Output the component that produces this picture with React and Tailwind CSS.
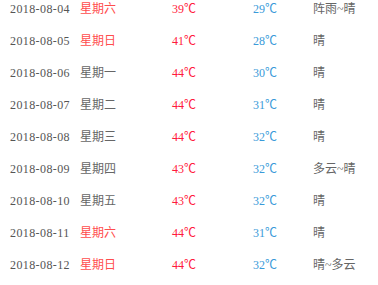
import React from 'react';

const rows = [
  { date: '2018-08-04', week: '星期六', high: '39℃', low: '29℃', weather: '阵雨~晴', weekend: true },
  { date: '2018-08-05', week: '星期日', high: '41℃', low: '28℃', weather: '晴', weekend: true },
  { date: '2018-08-06', week: '星期一', high: '44℃', low: '30℃', weather: '晴' },
  { date: '2018-08-07', week: '星期二', high: '44℃', low: '31℃', weather: '晴' },
  { date: '2018-08-08', week: '星期三', high: '44℃', low: '32℃', weather: '晴' },
  { date: '2018-08-09', week: '星期四', high: '43℃', low: '32℃', weather: '多云~晴' },
  { date: '2018-08-10', week: '星期五', high: '43℃', low: '32℃', weather: '晴' },
  { date: '2018-08-11', week: '星期六', high: '44℃', low: '31℃', weather: '晴', weekend: true },
  { date: '2018-08-12', week: '星期日', high: '44℃', low: '32℃', weather: '晴~多云', weekend: true },
];

export default function App() {
  return (
    <div className="w-[378px] h-[285px] bg-white overflow-hidden text-[12px] [font-family:'Liberation_Serif','Noto_Sans_CJK_SC',serif]">
      {rows.map((r) => (
        <div key={r.date} className="flex h-[32px] pb-[13px] leading-[19px]">
          <span className="w-[70px] pl-[10px] text-[#555] tracking-[0.4px]">{r.date}</span>
          <span className={`w-[102px] pl-[10px] ${r.weekend ? 'text-[#ff4d4d]' : 'text-[#666]'}`}>{r.week}</span>
          <span className="w-[81px] text-[#ff1a3c]">{r.high}</span>
          <span className="w-[60px] text-[#3a9ad9]">{r.low}</span>
          <span className="text-[#666]">{r.weather}</span>
        </div>
      ))}
    </div>
  );
}
